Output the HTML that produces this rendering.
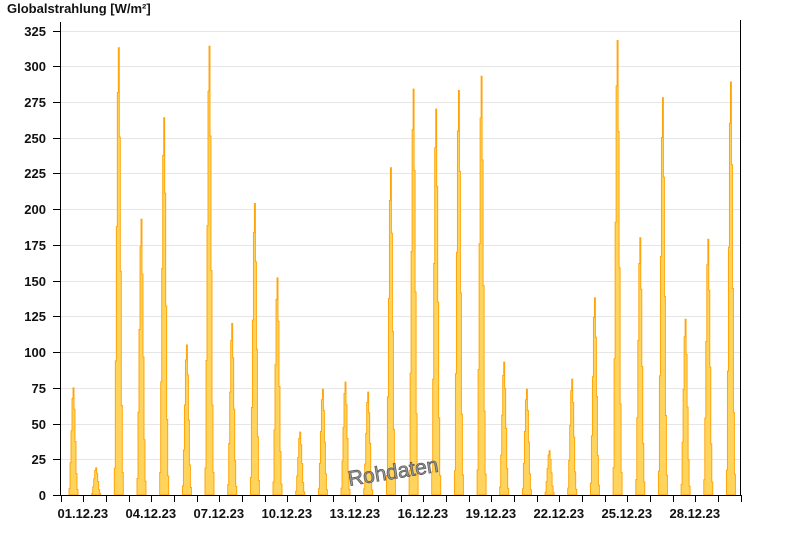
<!DOCTYPE html>
<html><head><meta charset="utf-8"><style>
body{margin:0;background:#fff;width:800px;height:550px;overflow:hidden}
svg text{font-family:"Liberation Sans",Arial,sans-serif;font-weight:bold;font-size:13px;fill:#111}
</style></head><body>
<svg id="s" width="800" height="550" xmlns="http://www.w3.org/2000/svg">
<text x="7" y="13">Globalstrahlung [W/m²]</text>
<g id="grid"></g>
<g id="bars"></g>
<g id="axes" stroke="#000" stroke-width="1"></g>
<g id="lab"></g>
<text x="347" y="478" transform="rotate(-9 398 468)" style="font-weight:normal;font-size:21px;fill:#999;stroke:#555;stroke-width:0.7">Rohdaten</text>
</svg>
<script>
var NS="http://www.w3.org/2000/svg";
function el(p,t,a,txt){var e=document.createElementNS(NS,t);for(var k in a)e.setAttribute(k,a[k]);if(txt!=null)e.textContent=txt;document.getElementById(p).appendChild(e);return e;}
var y0=495,ppu=(495-30.5)/325,x0=60.5,pd=22.67;
for(var v=0;v<=325;v+=25){var y=Math.round(y0-v*ppu)+0.5;
 if(v>0)el('grid','line',{x1:61,x2:740,y1:y,y2:y,stroke:'#e6e6e6'});
 el('axes','line',{x1:53,x2:60,y1:y,y2:y});
 el('lab','text',{x:46,y:y+4.5,'text-anchor':'end'},String(v));}
el('axes','line',{x1:x0,x2:x0,y1:22,y2:495.5});
el('axes','line',{x1:740.5,x2:740.5,y1:20,y2:495.5});
el('axes','line',{x1:53,x2:741,y1:495.5,y2:495.5});
for(var d=0;d<=30;d++){var x=Math.round(x0+d*pd)+0.5;el('axes','line',{x1:x,x2:x,y1:495,y2:502});
 if(d%3==0&&d<30){var dd=(d+1<10?'0':'')+(d+1);el('lab','text',{x:x-4,y:518},dd+'.12.23');}}
var pk=[75,19,313,193,264,105,314,120,204,152,44,74,79,72,229,284,270,283,293,93,74,31,81,138,318,180,278,123,179,289];
var prof=[0.06,0.3,0.6,0.9,1,0.8,0.5,0.2,0.05];
pk.forEach(function(p,i){var c=x0+i*pd+13;var w=1.0;var sx=c-4.5*w;var pts=[[sx,495]];
 prof.forEach(function(f,j){var y=495-p*f*ppu;pts.push([sx+j*w,y]);pts.push([sx+(j+1)*w,y]);});
 pts.push([sx+9*w,495]);
 el('bars','polygon',{points:pts.map(function(q){return q[0].toFixed(1)+','+q[1].toFixed(1)}).join(' '),fill:'#ffd45c',stroke:'#ffa000','stroke-width':0.9});});
</script>
</body></html>
